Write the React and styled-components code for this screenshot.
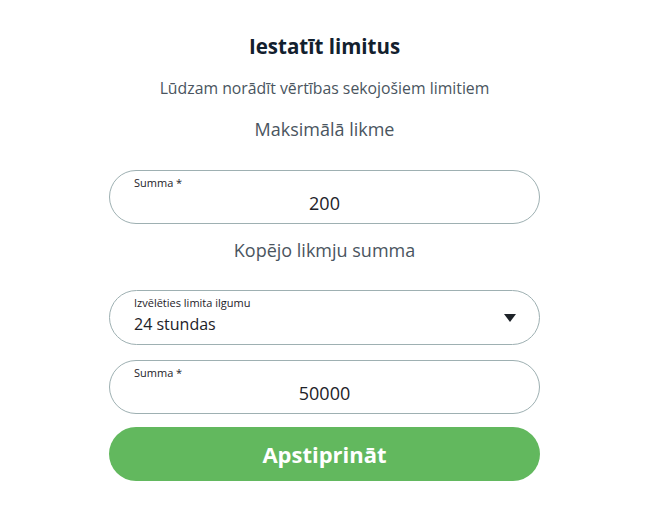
import React from "react";
import styled, { createGlobalStyle } from "styled-components";

const GlobalStyle = createGlobalStyle`
  body {
    margin: 0;
    background: #fff;
    font-family: "Open Sans", "Noto Sans", sans-serif;
  }
`;

function LimitsForm() {
  return (
    <Page>
      <Column>
        <Title>Iestatīt limitus</Title>
        <Subtitle>Lūdzam norādīt vērtības sekojošiem limitiem</Subtitle>
        <SectionTitle $bottom={28}>Maksimālā likme</SectionTitle>
        <Field>
          <FieldLabel>Summa *</FieldLabel>
          <FieldValue>200</FieldValue>
        </Field>
        <SectionTitle $top={13}>Kopējo likmju summa</SectionTitle>
        <Field $select>
          <FieldLabel>Izvēlēties limita ilgumu</FieldLabel>
          <SelectValue>24 stundas</SelectValue>
          <Caret />
        </Field>
        <Field $top={15}>
          <FieldLabel>Summa *</FieldLabel>
          <FieldValue>50000</FieldValue>
        </Field>
        <ConfirmButton>Apstiprināt</ConfirmButton>
      </Column>
    </Page>
  );
}

const Page = styled.div`
  width: 646px;
  padding: 31px 0 0 3px;
  box-sizing: border-box;
  display: flex;
  justify-content: center;
`;

const Column = styled.div`
  width: 431px;
  display: flex;
  flex-direction: column;
  align-items: stretch;
`;

const Title = styled.h1`
  margin: 0;
  text-align: center;
  font-size: 20.5px;
  line-height: 30px;
  font-weight: 700;
  color: #12202e;
`;

const Subtitle = styled.p`
  margin: 15px 0 0;
  text-align: center;
  font-size: 15.8px;
  line-height: 24px;
  color: #4a5560;
`;

const SectionTitle = styled.h2`
  margin: ${(p) => p.$top ?? 16}px 0 ${(p) => p.$bottom ?? 27}px;
  text-align: center;
  font-size: 18px;
  line-height: 26px;
  font-weight: 400;
  color: #4a5560;
`;

const Field = styled.div`
  position: relative;
  margin-top: ${(p) => p.$top ?? 0}px;
  height: ${(p) => (p.$select ? 55 : 54)}px;
  box-sizing: border-box;
  border: 1px solid #9eb0b2;
  border-radius: 28px;
  padding: 5px 24px 0;
  display: flex;
  flex-direction: column;
`;

const FieldLabel = styled.span`
  font-size: 11px;
  line-height: 14px;
  color: #1d2228;
`;

const FieldValue = styled.span`
  margin-top: 1px;
  text-align: center;
  font-size: 18px;
  line-height: 24px;
  color: #1d2228;
`;

const SelectValue = styled.span`
  margin-top: 2px;
  font-size: 16px;
  line-height: 24px;
  color: #1d2228;
`;

const Caret = styled.span`
  position: absolute;
  right: 23px;
  top: 23px;
  width: 0;
  height: 0;
  border-left: 6px solid transparent;
  border-right: 6px solid transparent;
  border-top: 8px solid #1d2228;
`;

const ConfirmButton = styled.button`
  margin-top: 13px;
  height: 54px;
  border: none;
  border-radius: 27px;
  background: #62b85e;
  color: #fff;
  font-family: inherit;
  font-size: 22px;
  font-weight: 700;
  cursor: pointer;
`;

export default function App() {
  return (
    <>
      <GlobalStyle />
      <LimitsForm />
    </>
  );
}
